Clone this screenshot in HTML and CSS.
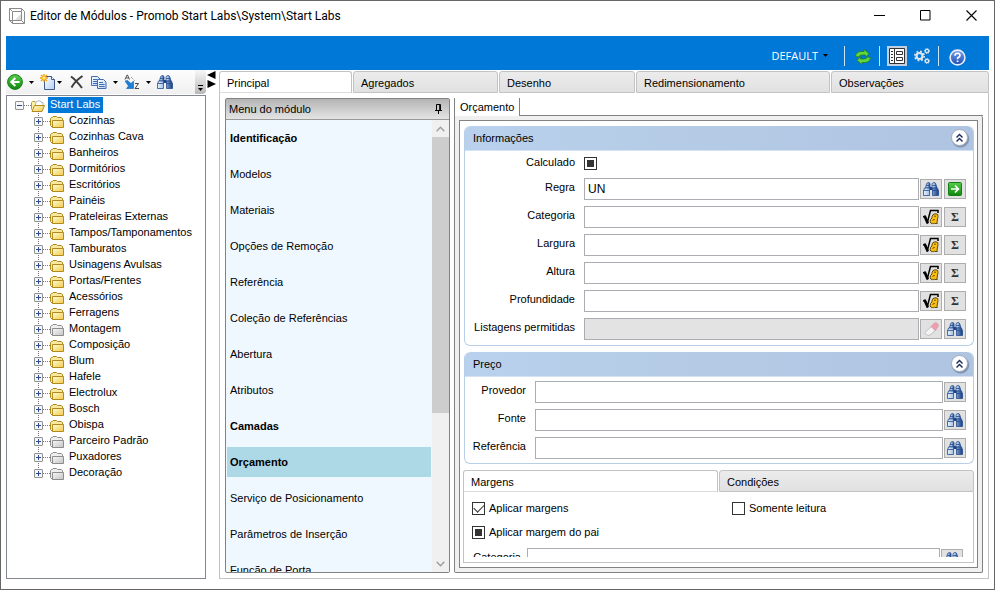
FILE: index.html
```html
<!DOCTYPE html>
<html lang="pt-BR">
<head>
<meta charset="utf-8">
<title>Editor de Módulos</title>
<link rel="stylesheet" href="styles.css">
</head>
<body>
<svg class="defs" aria-hidden="true">
  <defs>
    <linearGradient id="g-folder" x1="0" y1="0" x2="1" y2="1"><stop offset="0" stop-color="#fffbd0"/><stop offset="1" stop-color="#f2c94c"/></linearGradient>
    <linearGradient id="g-folder-off" x1="0" y1="0" x2="1" y2="1"><stop offset="0" stop-color="#f8f8f8"/><stop offset="1" stop-color="#c4c4c4"/></linearGradient>
    <linearGradient id="g-bin" x1="0" y1="0" x2="1" y2="0"><stop offset="0" stop-color="#e8f2fc"/><stop offset=".45" stop-color="#9dbbe2"/><stop offset="1" stop-color="#173d80"/></linearGradient>
    <linearGradient id="g-green" x1="0" y1="0" x2="0" y2="1"><stop offset="0" stop-color="#58cc4c"/><stop offset="1" stop-color="#0e860e"/></linearGradient>
    <linearGradient id="g-page" x1="0" y1="0" x2="1" y2="1"><stop offset="0" stop-color="#fff"/><stop offset="1" stop-color="#b4d0f2"/></linearGradient>
    <linearGradient id="g-help" x1="0" y1="0" x2="0" y2="1"><stop offset="0" stop-color="#7ca4ec"/><stop offset="1" stop-color="#1c49b4"/></linearGradient>
  </defs>
  <symbol id="i-plus" viewBox="0 0 9 9"><rect x=".5" y=".5" width="8" height="8" rx=".5" fill="#f6f6f6" stroke="#919191"/><path d="M2 4.500h5M4.500 2v5" stroke="#2b4a9b"/></symbol>
  <symbol id="i-minus" viewBox="0 0 9 9"><rect x=".5" y=".5" width="8" height="8" rx=".5" fill="#f6f6f6" stroke="#919191"/><path d="M2 4.500h5" stroke="#2b4a9b"/></symbol>
  <symbol id="i-folder" viewBox="0 0 14 12"><path d="M.5 9.500v-7l1-1h.8l.7-1h3.600l1 1H11.500l1 1.200v2" fill="#f8e9a0" stroke="#b08a1c"/><path d="M2.500 4.500h11v7H2.500z" fill="url(#g-folder)" stroke="#b08a1c"/><path d="M.5 9.500l2 2" stroke="#b08a1c"/></symbol>
  <symbol id="i-folder-off" viewBox="0 0 14 12"><path d="M.5 9.500v-7l1-1h.8l.7-1h3.600l1 1H11.500l1 1.200v2" fill="#eee" stroke="#8d8d8d"/><path d="M2.500 4.500h11v7H2.500z" fill="url(#g-folder-off)" stroke="#8d8d8d"/><path d="M.5 9.500l2 2" stroke="#8d8d8d"/></symbol>
  <symbol id="i-open" viewBox="0 0 14 12"><path d="M.5 9.500V2.500l1-1H4l1 1h6.500v3" fill="#fff0a8" stroke="#c09a2c"/><path d="M5 2l3-1.500L12 3v4H4z" fill="#fff" stroke="#a9b4c6"/><path d="M3.500 5.500h10l-2.500 6H1z" fill="url(#g-folder)" stroke="#b08a1c"/></symbol>
  <symbol id="i-bin" viewBox="0 0 16 14"><path d="M6.500 5h3v3h-3z" fill="#1c438a"/><path d="M3.500 2Q4 .5 5.500.5T7 2V6H2.500z" fill="url(#g-bin)" stroke="#234c92" stroke-width=".8"/><path d="M9 2Q9.500.5 11 .5T12.800 2L14 6H9z" fill="url(#g-bin)" stroke="#234c92" stroke-width=".8"/><path d="M1.500 6H6.500v7.500H.5V9zM9.500 6H14.500l1 3v4.500H9.500z" fill="url(#g-bin)" stroke="#234c92" stroke-width=".8"/><path d="M.5 8.500h6M9.500 8.500h6M3 3.500h4M9 3.500h4" stroke="#234c92" stroke-width=".8"/></symbol>
  <symbol id="i-root" viewBox="0 0 16 16"><path d="M0 8l2-1 2.500 6L7.500 1.500h7.500V4" fill="none" stroke="#000" stroke-width="1.500"/><path d="M1.800 7.500l3 7" stroke="#000" stroke-width="2.600"/><path d="M9 7.500Q9.500 5 12 4.800h1Q15.500 5 15 7.500L14 13l.3 1.500h-2.600l-.4-.6q-.8.900-1.800.8-2-.1-2.300-2Q7 10 9 9z" fill="#fbbf10" stroke="#3b2900" stroke-width=".8"/><path d="M11.300 7.200h1.500M9.800 11.500q.4-1 1.800-1" fill="none" stroke="#3b2900"/></symbol>
  <symbol id="i-up" viewBox="0 0 20 20"><ellipse cx="10.500" cy="11" rx="8.800" ry="8.600" fill="#5f7091" opacity=".55"/><circle cx="9.500" cy="9.500" r="8" fill="#fff" stroke="#a3abbd"/><path d="M6.500 9.500l3-3 3 3M6.500 13.500l3-3 3 3" fill="none" stroke="#17265c" stroke-width="1.400"/></symbol>
  <symbol id="i-caret" viewBox="0 0 5 3"><path d="M0 0h5L2.500 3z" fill="#000"/></symbol>
  <symbol id="i-erase" viewBox="0 0 15 14"><path d="M1 10.500L8 4l4.500 3.500L6 13q-2 .8-3.500-.3Q.6 11.500 1 10.500z" fill="#f4f4f6" stroke="#b5b2b8" stroke-width=".8"/><path d="M7 4.500L10.500 1q1-.8 2.500.2l1 1q.8 1.500 0 2.500L11 8.500z" fill="#ee9fad" stroke="#db8d9b" stroke-width=".6"/></symbol>
</svg>

<div class="window">
  <header class="titlebar">
    <svg class="app-icon" width="16" height="16" viewBox="0 0 16 16" fill="none" stroke="#8b8b8b"><path d="M.5.5h12l3 3v12h-12l-3-3z" fill="#fff"/><path d="M3.500 3.500h9v9h-9zM.5.5l3 3M12.500 12.500l3 3M12.500 3.500v-3M3.500 12.500H.5M3.500 12.500v3"/><path d="M12 6v6H6z" fill="#ddd" stroke="none"/></svg>
    <h1>Editor de Módulos - Promob Start Labs\System\Start Labs</h1>
    <div class="window-buttons">
      <button aria-label="Minimizar"><svg width="11" height="11" viewBox="0 0 11 11"><path d="M0 5.500h11" stroke="#000"/></svg></button>
      <button aria-label="Maximizar"><svg width="11" height="11" viewBox="0 0 11 11"><path d="M.5.500h9.500v9.500H.500z" fill="none" stroke="#000"/></svg></button>
      <button aria-label="Fechar"><svg width="11" height="11" viewBox="0 0 11 11"><path d="M.5.500l10 10M10.500.500l-10 10" stroke="#000" stroke-width="1.100"/></svg></button>
    </div>
  </header>

  <div class="banner">
    <button class="profile">DEFAULT <svg width="5" height="3"><use href="#i-caret"/></svg></button>
    <span class="rule"></span>
    <button class="low" aria-label="Atualizar"><svg width="16" height="16" viewBox="0 0 16 16" fill="#62d63e" stroke="#1f7d1f" stroke-width=".8"><path d="M.5 7.500Q1 2.500 6.500 2.500H9V.5l5 4-3.500 4V6H7Q4.500 6 3.500 8z"/><path d="M15.500 8.500q-.5 5-6 5H7v2l-5-4 3.500-4V10H9q2.500 0 3.500-2z"/></svg></button>
    <span class="rule"></span>
    <button class="pressed" aria-label="Painel"><svg width="16" height="16" viewBox="0 0 16 16" fill="none" stroke="#333"><path d="M.5.500h15v15H.5z" fill="#fff"/><path d="M5.500 0v16M2 3.500h2M2 6.500h2M2 9.500h2M2 12.500h2"/><path d="M7.500 3.500h6v3h-6zM7.500 9.500h6v3h-6z"/></svg></button>
    <button aria-label="Configurações"><svg width="16" height="16" viewBox="0 0 16 16" fill="none" stroke="#dfe6ee"><circle cx="5.500" cy="8" r="3" stroke-width="2.200"/><circle cx="5.500" cy="8" r="4.700" stroke-width="1.600" stroke-dasharray="1.850 1.840"/><circle cx="13" cy="3" r="1.700" stroke-width="1.300"/><circle cx="13" cy="3" r="2.500" stroke-dasharray="1 .960"/><circle cx="13" cy="13" r="1.700" stroke-width="1.300"/><circle cx="13" cy="13" r="2.500" stroke-dasharray="1 .960"/></svg></button>
    <span class="rule"></span>
    <button class="low help" aria-label="Ajuda"><svg width="17" height="17" viewBox="0 0 17 17"><circle cx="8.500" cy="8.500" r="7.400" fill="url(#g-help)" stroke="#e9eefa" stroke-width="1.600"/><path d="M6 6.700Q6 4.300 8.500 4.300T11 6.500Q11 7.700 8.600 9v1.300" fill="none" stroke="#fff" stroke-width="1.600"/><path d="M7.700 11.500h1.700v1.600H7.700z" fill="#fff"/></svg></button>
  </div>

  <div class="workspace">
    <aside class="explorer">
      <div class="toolbar">
        <button aria-label="Voltar"><svg width="16" height="16" viewBox="0 0 16 16"><circle cx="8" cy="8" r="7.400" fill="url(#g-green)" stroke="#168016"/><path d="M12.500 8H5M8.300 4L4.300 8l4 4" fill="none" stroke="#fff" stroke-width="2"/></svg></button>
        <svg class="drop" width="5" height="3"><use href="#i-caret"/></svg>
        <button aria-label="Novo"><svg width="16" height="16" viewBox="0 0 16 16"><path d="M4.500 2.500h7l3 3v10h-10z" fill="url(#g-page)" stroke="#3e5c8c"/><path d="M11.500 2.500v3h3" fill="#fff" stroke="#3e5c8c"/><path d="M4 0v8M0 4h8M1 1l6 6M7 1L1 7" stroke="#f0a000" stroke-width="1.400"/><circle cx="4" cy="4" r="1.800" fill="#ffe478"/></svg></button>
        <svg class="drop near" width="5" height="3"><use href="#i-caret"/></svg>
        <button aria-label="Excluir"><svg width="14" height="14" viewBox="0 0 14 14"><path d="M1 1.500Q6 5 12 13M12.500 1Q5 6 1.500 12.500" fill="none" stroke="#3d3d3d" stroke-width="2"/></svg></button>
        <button class="copy" aria-label="Copiar"><svg width="16" height="13" viewBox="0 0 16 13" stroke="#416fb4"><path d="M.5.500h6l2.500 2.500v6.500H.5z" fill="url(#g-page)"/><path d="M2 3.500h4M2 5.500h4M2 7.500h4"/><path d="M6.500 3.500h6l2.500 2.500v6.500H6.500z" fill="url(#g-page)"/><path d="M8 6.500h4M8 8.500h5.500M8 10.500h5.500"/></svg></button>
        <svg class="drop" width="5" height="3"><use href="#i-caret"/></svg>
        <button aria-label="Ordenar"><svg width="16" height="16" viewBox="0 0 16 16"><path d="M1 5.500L3 1h.5L5.500 5.500M2 4h3" fill="none" stroke="#555"/><path d="M11 9.500h3.500l-3.500 5h4" fill="none" stroke="#444"/><path d="M7 3l4 4" stroke="#777" stroke-dasharray="1 1"/><path d="M1 7l2.500-.5L7 9.500 9.500 7v7.500H2.500L4.500 12z" fill="#1d7fd8" stroke="#155fa8" stroke-width=".6"/></svg></button>
        <svg class="drop" width="5" height="3"><use href="#i-caret"/></svg>
        <button aria-label="Localizar"><svg width="16" height="14"><use href="#i-bin"/></svg></button>
        <button class="overflow" aria-label="Mais opções"><svg width="5" height="6" viewBox="0 0 5 6"><path d="M0 .5h5" stroke="#000"/><path d="M0 3h5L2.500 6z"/></svg></button>
      </div>
      <div class="tree">
        <button class="node root"><svg width="9" height="9"><use href="#i-minus"/></svg><i></i><svg width="14" height="12"><use href="#i-open"/></svg><span>Start Labs</span></button>
        <div class="children">
          <button class="node"><svg width="9" height="9"><use href="#i-plus"/></svg><i></i><svg width="14" height="12"><use href="#i-folder"/></svg><span>Cozinhas</span></button>
          <button class="node"><svg width="9" height="9"><use href="#i-plus"/></svg><i></i><svg width="14" height="12"><use href="#i-folder"/></svg><span>Cozinhas Cava</span></button>
          <button class="node"><svg width="9" height="9"><use href="#i-plus"/></svg><i></i><svg width="14" height="12"><use href="#i-folder"/></svg><span>Banheiros</span></button>
          <button class="node"><svg width="9" height="9"><use href="#i-plus"/></svg><i></i><svg width="14" height="12"><use href="#i-folder"/></svg><span>Dormitórios</span></button>
          <button class="node"><svg width="9" height="9"><use href="#i-plus"/></svg><i></i><svg width="14" height="12"><use href="#i-folder"/></svg><span>Escritórios</span></button>
          <button class="node"><svg width="9" height="9"><use href="#i-plus"/></svg><i></i><svg width="14" height="12"><use href="#i-folder"/></svg><span>Painéis</span></button>
          <button class="node"><svg width="9" height="9"><use href="#i-plus"/></svg><i></i><svg width="14" height="12"><use href="#i-folder"/></svg><span>Prateleiras Externas</span></button>
          <button class="node"><svg width="9" height="9"><use href="#i-plus"/></svg><i></i><svg width="14" height="12"><use href="#i-folder"/></svg><span>Tampos/Tamponamentos</span></button>
          <button class="node"><svg width="9" height="9"><use href="#i-plus"/></svg><i></i><svg width="14" height="12"><use href="#i-folder"/></svg><span>Tamburatos</span></button>
          <button class="node"><svg width="9" height="9"><use href="#i-plus"/></svg><i></i><svg width="14" height="12"><use href="#i-folder"/></svg><span>Usinagens Avulsas</span></button>
          <button class="node"><svg width="9" height="9"><use href="#i-plus"/></svg><i></i><svg width="14" height="12"><use href="#i-folder"/></svg><span>Portas/Frentes</span></button>
          <button class="node"><svg width="9" height="9"><use href="#i-plus"/></svg><i></i><svg width="14" height="12"><use href="#i-folder"/></svg><span>Acessórios</span></button>
          <button class="node"><svg width="9" height="9"><use href="#i-plus"/></svg><i></i><svg width="14" height="12"><use href="#i-folder"/></svg><span>Ferragens</span></button>
          <button class="node"><svg width="9" height="9"><use href="#i-plus"/></svg><i></i><svg width="14" height="12"><use href="#i-folder-off"/></svg><span>Montagem</span></button>
          <button class="node"><svg width="9" height="9"><use href="#i-plus"/></svg><i></i><svg width="14" height="12"><use href="#i-folder"/></svg><span>Composição</span></button>
          <button class="node"><svg width="9" height="9"><use href="#i-plus"/></svg><i></i><svg width="14" height="12"><use href="#i-folder"/></svg><span>Blum</span></button>
          <button class="node"><svg width="9" height="9"><use href="#i-plus"/></svg><i></i><svg width="14" height="12"><use href="#i-folder"/></svg><span>Hafele</span></button>
          <button class="node"><svg width="9" height="9"><use href="#i-plus"/></svg><i></i><svg width="14" height="12"><use href="#i-folder"/></svg><span>Electrolux</span></button>
          <button class="node"><svg width="9" height="9"><use href="#i-plus"/></svg><i></i><svg width="14" height="12"><use href="#i-folder"/></svg><span>Bosch</span></button>
          <button class="node"><svg width="9" height="9"><use href="#i-plus"/></svg><i></i><svg width="14" height="12"><use href="#i-folder"/></svg><span>Obispa</span></button>
          <button class="node"><svg width="9" height="9"><use href="#i-plus"/></svg><i></i><svg width="14" height="12"><use href="#i-folder-off"/></svg><span>Parceiro Padrão</span></button>
          <button class="node"><svg width="9" height="9"><use href="#i-plus"/></svg><i></i><svg width="14" height="12"><use href="#i-folder-off"/></svg><span>Puxadores</span></button>
          <button class="node"><svg width="9" height="9"><use href="#i-plus"/></svg><i></i><svg width="14" height="12"><use href="#i-folder-off"/></svg><span>Decoração</span></button>
        </div>
      </div>
    </aside>

    <div class="splitter">
      <button aria-label="Recolher"><svg width="9" height="8" viewBox="0 0 9 8"><path d="M8.500 0v8L0 4z"/></svg></button>
      <button aria-label="Expandir"><svg width="9" height="8" viewBox="0 0 9 8"><path d="M.5 0v8L9 4z"/></svg></button>
    </div>

    <main class="editor">
      <nav class="tabs">
        <button class="tab t1 active">Principal</button>
        <button class="tab t2">Agregados</button>
        <button class="tab t3">Desenho</button>
        <button class="tab t4">Redimensionamento</button>
        <button class="tab t5">Observações</button>
      </nav>
      <div class="editor-body">
        <section class="menu">
          <div class="menu-head"><h2>Menu do módulo</h2><button aria-label="Fixar"><svg width="7" height="10" viewBox="0 0 7 10" fill="none" stroke="#000"><path d="M1.500 6V.5h4V6M0 6.500h7M3.500 7v3"/><path d="M4.700 1v5" stroke-width="1"/></svg></button></div>
          <div class="menu-body">
            <div class="menu-list">
              <button class="strong">Identificação</button>
              <button>Modelos</button>
              <button>Materiais</button>
              <button>Opções de Remoção</button>
              <button>Referência</button>
              <button>Coleção de Referências</button>
              <button>Abertura</button>
              <button>Atributos</button>
              <button class="strong">Camadas</button>
              <button class="strong selected">Orçamento</button>
              <button>Serviço de Posicionamento</button>
              <button>Parâmetros de Inserção</button>
              <button>Função de Porta</button>
            </div>
            <div class="scrollbar">
              <button aria-label="Rolar para cima"><svg width="9" height="6" viewBox="0 0 9 6"><path d="M.7 5.300l3.800-4 3.800 4" fill="none" stroke="#9c9c9c" stroke-width="1.300"/></svg></button>
              <div class="track"><div class="thumb"></div></div>
              <button aria-label="Rolar para baixo"><svg width="9" height="6" viewBox="0 0 9 6"><path d="M.7.700l3.800 4 3.800-4" fill="none" stroke="#9c9c9c" stroke-width="1.300"/></svg></button>
            </div>
          </div>
        </section>

        <section class="details">
          <div class="sheet-tabs"><button class="sheet-tab">Orçamento</button><span class="sheet-line"></span></div>
          <div class="sheet">
            <div class="page">
              <section class="group">
                <div class="group-head"><h2>Informações</h2><button aria-label="Recolher informações"><svg width="20" height="20"><use href="#i-up"/></svg></button></div>
                <div class="fields wide">
                  <div class="field short"><label for="calc">Calculado</label><input class="mixed" type="checkbox" id="calc"></div>
                  <div class="field"><label for="regra">Regra</label><input type="text" id="regra" value="UN"><button class="act" aria-label="Localizar regra"><svg width="16" height="14"><use href="#i-bin"/></svg></button><button class="act" aria-label="Ir para regra"><svg width="14" height="14" viewBox="0 0 14 14"><rect x=".5" y=".5" width="13" height="13" rx="1" fill="url(#g-green)" stroke="#128012"/><path d="M3 7h7M7 3.500L10.500 7 7 10.500" fill="none" stroke="#fff" stroke-width="1.600"/></svg></button></div>
                  <div class="field"><label for="cat">Categoria</label><input type="text" id="cat"><button class="act" aria-label="Fórmula da categoria"><svg width="16" height="16"><use href="#i-root"/></svg></button><button class="act sum">Σ</button></div>
                  <div class="field"><label for="larg">Largura</label><input type="text" id="larg"><button class="act" aria-label="Fórmula da largura"><svg width="16" height="16"><use href="#i-root"/></svg></button><button class="act sum">Σ</button></div>
                  <div class="field"><label for="alt">Altura</label><input type="text" id="alt"><button class="act" aria-label="Fórmula da altura"><svg width="16" height="16"><use href="#i-root"/></svg></button><button class="act sum">Σ</button></div>
                  <div class="field"><label for="prof">Profundidade</label><input type="text" id="prof"><button class="act" aria-label="Fórmula da profundidade"><svg width="16" height="16"><use href="#i-root"/></svg></button><button class="act sum">Σ</button></div>
                  <div class="field"><label for="list">Listagens permitidas</label><input type="text" id="list" disabled><button class="act" aria-label="Limpar listagens"><svg width="15" height="14"><use href="#i-erase"/></svg></button><button class="act" aria-label="Localizar listagens"><svg width="16" height="14"><use href="#i-bin"/></svg></button></div>
                </div>
              </section>

              <section class="group">
                <div class="group-head"><h2>Preço</h2><button aria-label="Recolher preço"><svg width="20" height="20"><use href="#i-up"/></svg></button></div>
                <div class="fields">
                  <div class="field"><label for="prov">Provedor</label><input type="text" id="prov"><button class="act" aria-label="Localizar provedor"><svg width="16" height="14"><use href="#i-bin"/></svg></button></div>
                  <div class="field"><label for="fonte">Fonte</label><input type="text" id="fonte"><button class="act" aria-label="Localizar fonte"><svg width="16" height="14"><use href="#i-bin"/></svg></button></div>
                  <div class="field"><label for="ref">Referência</label><input type="text" id="ref"><button class="act" aria-label="Localizar referência"><svg width="16" height="14"><use href="#i-bin"/></svg></button></div>
                </div>
              </section>

              <section class="margins">
                <nav class="half-tabs"><button class="tab active">Margens</button><button class="tab">Condições</button></nav>
                <div class="margins-body">
                  <div class="margins-view">
                    <div class="checks">
                      <label><input type="checkbox" checked>Aplicar margens</label>
                      <label><input type="checkbox">Somente leitura</label>
                      <label><input class="mixed" type="checkbox">Aplicar margem do pai</label>
                    </div>
                    <div class="field"><label for="mcat">Categoria</label><input type="text" id="mcat"><button class="act" aria-label="Localizar categoria"><svg width="16" height="14"><use href="#i-bin"/></svg></button></div>
                  </div>
                </div>
              </section>
            </div>
          </div>
        </section>
      </div>
    </main>
  </div>
</div>
</body>
</html>
```
FILE: styles.css
```css
* { box-sizing: border-box; }

body {
  display: flex;
  height: 100vh;
  margin: 0;
  padding: 0 13px 11px 0;
  background: #fff;
  color: #000;
  font: 11px/16px "Liberation Sans", Arial, sans-serif;
}

button, input { font: inherit; color: inherit; margin: 0; }
button { padding: 0; border: 0; background: none; text-align: left; }
h1, h2 { margin: 0; font: inherit; }
svg { display: block; flex: none; }
.defs { position: absolute; width: 0; height: 0; }

.window {
  flex: 1;
  min-width: 0;
  display: flex;
  flex-direction: column;
  padding: 0 5px 10px;
  border: 1px solid #666;
}

/* Title bar */
.titlebar { display: flex; align-items: center; height: 35px; padding: 0 12px 6px 3px; }
.titlebar h1 { flex: 1; margin-left: 5px; font: 12px/16px Roboto, sans-serif; }
.window-buttons { display: flex; gap: 35px; }

/* Blue banner */
.banner {
  display: flex;
  align-items: center;
  justify-content: flex-end;
  height: 34px;
  padding: 5px 23px 0 0;
  background: #0078d7;
}
.profile { display: flex; align-items: center; gap: 5px; margin-right: 16px; color: #fff; font: 11px/16px "Open Sans", sans-serif; }
.rule { width: 1px; height: 20px; margin-right: 10px; background: #cfe4f7; }
.banner button[aria-label] { margin-right: 8px; }
.banner .pressed { padding: 2px; background: #c3d0e2; }
.banner .rule + .pressed { margin: 0 7px 0 -3px; }
.banner .low { padding-top: 3px; }
.banner .help[aria-label] { margin-right: 0; }

.workspace { flex: 1; display: flex; min-height: 0; }

/* Explorer */
.explorer { display: flex; flex-direction: column; width: 200px; }
.toolbar {
  display: flex;
  align-items: center;
  height: 24px;
  margin-bottom: 1px;
  padding-left: 1px;
  border-radius: 0 0 4px 0;
  background: linear-gradient(#fdfdfd, #f0f0f0);
}
.toolbar .drop { margin: 0 6px; }
.toolbar .near { margin: 0 8px 0 1px; }
.toolbar .copy { margin-left: 7px; }
.toolbar .overflow {
  display: flex;
  align-items: flex-end;
  justify-content: center;
  width: 11px;
  height: 24px;
  margin-left: auto;
  padding-bottom: 3px;
  border-radius: 0 0 4px 0;
  background: linear-gradient(#f8f8f8, #b8b8b8);
}

.tree { flex: 1; min-height: 0; overflow: hidden; padding: 1px 0 0 8px; border: 1px solid #828790; }
.node { display: flex; align-items: center; height: 16px; padding-top: 1px; white-space: nowrap; }
.node i { width: 7px; border-top: 1px dotted #777; }
.node span { height: 16px; margin: -1px 0 0 4px; padding: 0 1px; line-height: 14px; }
.root span { margin-left: 3px; padding: 0 3px 0 2px; background: #0078d7; color: #fff; }
.children {
  margin-left: 19px;
  background: repeating-linear-gradient(#777 0 1px, transparent 1px 2px) 4px 0 / 1px calc(100% - 8px) no-repeat;
}

.splitter { display: flex; flex-direction: column; gap: 1px; width: 13px; padding: 1px 0 0 1px; }

/* Editor */
.editor { flex: 1; min-width: 0; display: flex; flex-direction: column; padding-top: 1px; }
.tabs { display: flex; gap: 1px; }
.tab {
  height: 22px;
  padding: 1px 0 0 7px;
  border: 1px solid #c3c3c3;
  border-radius: 3px 3px 0 0;
  background: linear-gradient(#ececec, #e1e1e1);
}
.tab.active { background: #fff; border-bottom-color: #dcdcdc; }
.t1 { width: 133px; }
.t2 { width: 145px; }
.t3 { width: 136px; }
.t4 { width: 194px; }
.t5 { flex: 1; }
.editor-body { flex: 1; min-height: 0; display: flex; gap: 4px; padding: 5px; border: 1px solid #c3c3c3; border-top: 0; }

/* Module menu */
.menu { display: flex; flex-direction: column; width: 225px; border: 1px solid #828282; border-radius: 2px; background: #f0f8ff; }
.menu-head {
  display: flex;
  align-items: center;
  justify-content: space-between;
  height: 21px;
  padding: 0 7px 0 3px;
  border-bottom: 1px solid #999;
  background: linear-gradient(#b4b4b4, #e4e4e4);
}
.menu-body { flex: 1; min-height: 0; display: flex; }
.menu-list { flex: 1; display: flex; flex-direction: column; gap: 6px; padding: 3px 1px 0; overflow: hidden; }
.menu-list button { flex: none; height: 30px; padding: 0 3px; }
.menu-list .strong { font-weight: bold; }
.menu-list .selected { background: #add8e6; }
.scrollbar { display: flex; flex-direction: column; width: 17px; background: #f0f0f0; }
.scrollbar button { display: flex; align-items: center; justify-content: center; height: 17px; }
.track { flex: 1; }
.thumb { height: 66%; background: #cdcdcd; }

/* Budget sheet */
.details { flex: 1; min-width: 0; display: flex; flex-direction: column; }
.sheet-tabs { display: flex; height: 18px; border-left: 1px solid #828282; }
.sheet-tab { padding: 0 5px; border-right: 1px solid #828282; }
.sheet-line { flex: 1; border-bottom: 1px solid #828282; }
.sheet {
  flex: 1;
  min-height: 0;
  padding: 4px;
  border: 1px solid #828282;
  border-top: 0;
  border-radius: 0 2px 2px 2px;
  background: linear-gradient(#fff, #fff) content-box, #f0f0f0;
}
.page { display: flex; flex-direction: column; gap: 6px; height: 100%; padding: 5px 3px 4px; border: 1px solid #828282; }

.group { margin-left: 1px; border: 1px solid #b8cfea; border-top: 0; border-radius: 6px; }
.group-head {
  display: flex;
  align-items: center;
  justify-content: space-between;
  height: 25px;
  padding: 0 3px 0 8px;
  border-bottom: 1px solid #d5e2f3;
  border-radius: 6px 6px 0 0;
  background: linear-gradient(90deg, #b9d1ec, #afc4e0);
}
.fields { padding: 4px 7px 4px 0; display: flex; flex-direction: column; gap: 6px; }
.wide { padding-bottom: 5px; }
.field { display: flex; align-items: center; gap: 1px; }
.field label { width: 61px; margin-right: 8px; padding-bottom: 4px; text-align: right; white-space: nowrap; }
.wide label { width: 110px; }
input[type="text"] {
  flex: 1;
  min-width: 0;
  height: 22px;
  padding: 0 3px;
  border: 1px solid #abadb3;
  background: #fff;
  font-size: 12px;
}
input[type="text"]:disabled { background: #e3e3e3; }
.act {
  display: flex;
  align-items: center;
  justify-content: center;
  width: 22px;
  height: 20px;
  border: 1px solid #adadad;
  background: #e1e1e1;
}
.act + .act { margin-left: 1px; }
.sum { font: bold 12px/16px "Liberation Serif", serif; color: #333; }
.short { height: 17px; }

input[type="checkbox"] {
  appearance: none;
  flex: none;
  display: grid;
  place-items: center;
  width: 13px;
  height: 13px;
  border: 1px solid #333;
  background: #fff;
}
.mixed::before { content: ""; width: 7px; height: 7px; background: #333; }
input[type="checkbox"]:checked::before {
  content: "";
  width: 9px;
  height: 5px;
  margin-bottom: 3px;
  border: solid #333;
  border-width: 0 0 1px 1px;
  transform: rotate(-45deg);
}

/* Margins */
.margins { flex: 1; min-height: 0; display: flex; flex-direction: column; }
.half-tabs { display: grid; grid-template-columns: 1fr 1fr; gap: 1px; }
.margins-body { flex: 1; min-height: 0; padding: 0 5px 5px 8px; border: 1px solid #c3c3c3; border-top: 0; }
.margins-view { height: 100%; overflow: hidden; }
.checks { display: grid; grid-template-columns: 260px 1fr; row-gap: 8px; padding: 8px 0; }
.checks label { display: flex; align-items: center; gap: 4px; }
.margins .field { padding-right: 5px; }
.margins .field > label { width: 49px; margin-right: 5px; padding-bottom: 5px; }
```
